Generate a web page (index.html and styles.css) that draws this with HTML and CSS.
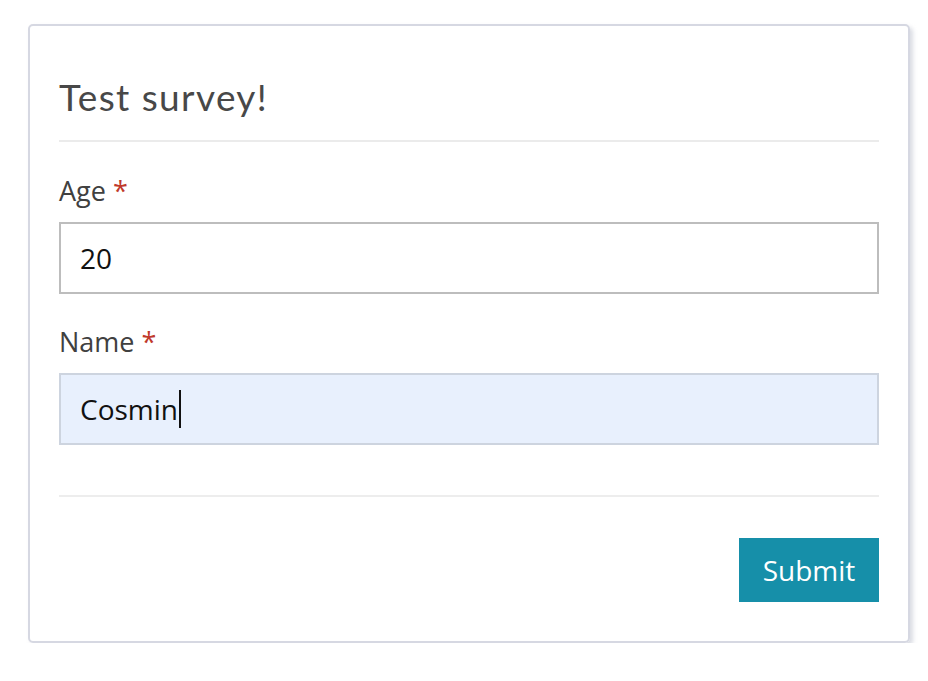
FILE: index.html
```html
<!DOCTYPE html>
<html>
<head>
<meta charset="utf-8">
<link rel="stylesheet" href="styles.css">
</head>
<body>
<div class="card">
  <div class="card-header"><h3 class="title">Test survey!</h3></div>
  <div class="field">
    <label class="label">Age <span class="req">*</span></label>
    <div class="input">20</div>
  </div>
  <div class="field">
    <label class="label">Name <span class="req">*</span></label>
    <div class="input filled">Cosmin<span class="caret"></span></div>
  </div>
  <div class="footer">
    <button class="btn">Submit</button>
  </div>
</div>
</body>
</html>
```
FILE: styles.css
```css
html, body { margin: 0; padding: 0; background: #fff; }
body { padding: 24px 0 0 28px; font-family: "Open Sans", sans-serif; }
.card {
  width: 882px;
  box-sizing: border-box;
  border: 2px solid #d6d8e2;
  border-radius: 5px;
  box-shadow: 3px 3px 4px rgba(150,155,175,0.35);
  padding: 0 29px 39px;
}
.card-header {
  border-bottom: 2px solid #ebebeb;
  padding: 49px 0 21px;
}
.title {
  margin: 0;
  font-family: "Lato", "Open Sans", sans-serif;
  font-weight: 400;
  font-size: 37px;
  line-height: 44px;
  color: #484848;
  letter-spacing: 1.4px;
}
.field { margin-top: 31px; }
.field + .field { margin-top: 30px; }
.label {
  display: block;
  font-size: 27px;
  line-height: 36px;
  color: #404040;
  margin-bottom: 13px;
}
.req { color: #c0392b; }
.input {
  box-sizing: border-box;
  height: 72px;
  border: 2px solid #bdbdbd;
  padding: 0 19px;
  display: flex;
  align-items: center;
  font-size: 28px;
  color: #111;
}
.input.filled { background: #e8f0fd; border-color: #cdd4df; }
.caret { display: inline-block; width: 2px; height: 38px; background: #111; margin-left: 1px; }
.footer {
  margin-top: 50px;
  border-top: 2px solid #ededed;
  padding-top: 41px;
  display: flex;
  justify-content: flex-end;
}
.btn {
  border: none;
  background: #168fa9;
  color: #fff;
  font-family: "Open Sans", sans-serif;
  font-size: 28px;
  width: 140px;
  height: 64px;
  padding: 0;
}
```
